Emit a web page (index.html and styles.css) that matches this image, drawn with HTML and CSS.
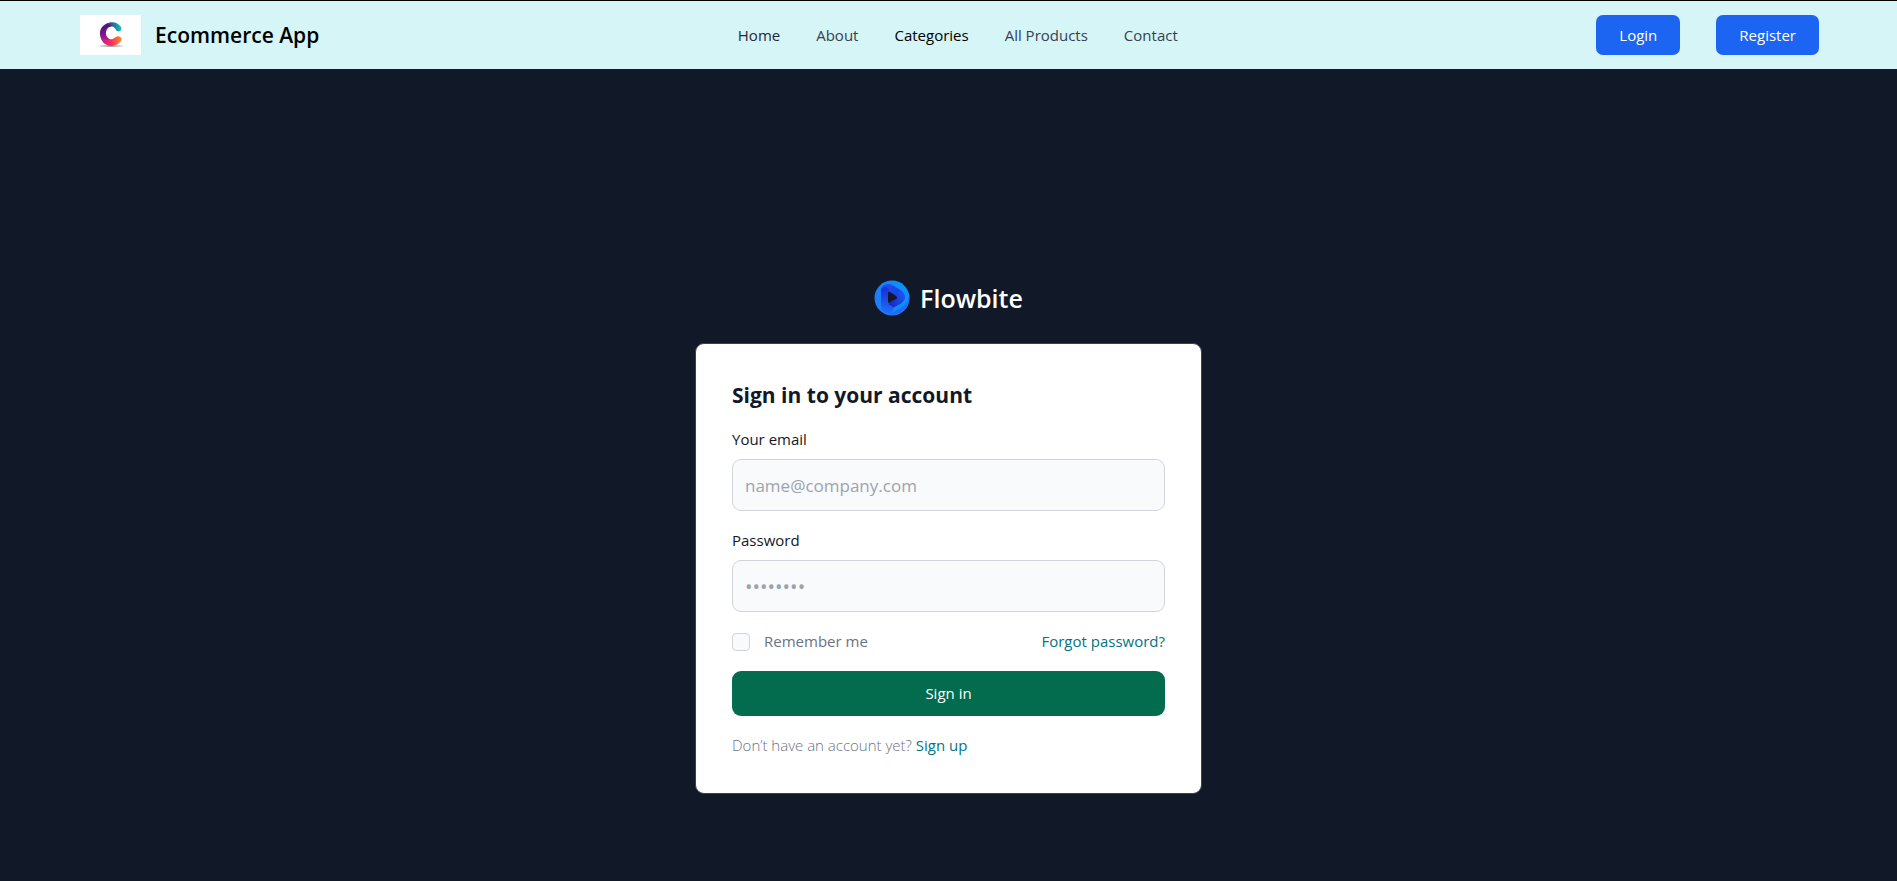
FILE: index.html
```html
<!DOCTYPE html>
<html lang="en">
<head>
<meta charset="utf-8">
<meta name="viewport" content="width=device-width, initial-scale=1">
<title>Ecommerce App</title>
<link rel="stylesheet" href="styles.css">
</head>
<body>
<header class="header">
  <a class="brand" href="#">
    <svg class="brand-logo" viewBox="0 0 61 40" aria-hidden="true">
      <defs>
        <linearGradient id="c-top" x1="0" y1="0" x2="1" y2="0"><stop offset="0" stop-color="#5b1a86"/><stop offset=".45" stop-color="#1f6f9c"/><stop offset="1" stop-color="#16c3c0"/></linearGradient>
        <linearGradient id="c-left" x1="0" y1="0" x2=".3" y2="1"><stop offset="0" stop-color="#3b1470"/><stop offset=".5" stop-color="#7a1690"/><stop offset="1" stop-color="#d81b7c"/></linearGradient>
        <linearGradient id="c-bottom" x1="0" y1="0" x2="1" y2="0"><stop offset="0" stop-color="#c4178a"/><stop offset=".5" stop-color="#fa2f62"/><stop offset="1" stop-color="#ff8a1e"/></linearGradient>
        <radialGradient id="c-shadow"><stop offset="0" stop-color="#777"/><stop offset="1" stop-color="#fff"/></radialGradient>
      </defs>
      <rect width="61" height="40" fill="#fff"/>
      <ellipse cx="31" cy="31" rx="15" ry="1.3" fill="url(#c-shadow)"/>
      <path d="M34 9C25 6 19 13 20 20C21 27 27 31 33 30L32 25C26 24 24 17 28 13C30 11 34 11 36 13C37 11 36 10 34 9Z" fill="url(#c-left)"/>
      <path d="M26 9C31 6 38 7 41 12C43 16 38 18 36 15C34 11 30 9 26 9Z" fill="url(#c-top)"/>
      <path d="M21 23C25 25 31 26 36 22C39 20 43 23 41 26C36 33 24 33 21 23Z" fill="url(#c-bottom)"/>
    </svg>
    <span class="brand-name">Ecommerce App</span>
  </a>
  <nav class="nav" aria-label="Main">
    <a class="nav-link nav-link-home" href="#">Home</a>
    <a class="nav-link" href="#">About</a>
    <a class="nav-link nav-link-active" href="#">Categories</a>
    <a class="nav-link" href="#">All Products</a>
    <a class="nav-link" href="#">Contact</a>
  </nav>
  <div class="actions">
    <button class="button" type="button">Login</button>
    <button class="button" type="button">Register</button>
  </div>
</header>
<main class="main">
  <a class="product" href="#">
    <svg class="product-logo" viewBox="0 0 36 36" aria-hidden="true">
      <defs>
        <linearGradient id="f-disc" x1="0" y1=".3" x2="1" y2=".2"><stop offset="0" stop-color="#1f7cf8"/><stop offset="1" stop-color="#0795ff"/></linearGradient>
        <linearGradient id="f-top" gradientUnits="userSpaceOnUse" x1="8" y1="8" x2="27" y2="18"><stop offset="0" stop-color="#1b4ff0"/><stop offset="1" stop-color="#1c3fe0"/></linearGradient>
        <linearGradient id="f-right" gradientUnits="userSpaceOnUse" x1="28" y1="16" x2="13" y2="24"><stop offset="0" stop-color="#1c50ea"/><stop offset="1" stop-color="#1a1ec0"/></linearGradient>
        <linearGradient id="f-left" gradientUnits="userSpaceOnUse" x1="9" y1="31" x2="12" y2="11"><stop offset="0" stop-color="#1d6cf8"/><stop offset="1" stop-color="#1b35dc"/></linearGradient>
      </defs>
      <circle cx="18" cy="18" r="17.5" fill="url(#f-disc)"/>
      <path d="M20 35C30 34 36 26 35 16C34 23 30 26 26 28L19 32C16 34 12 33 9 31C12 34 16 35 20 35Z" fill="#1f6cf6"/>
      <g fill="none" stroke-width="8" stroke-linecap="round" stroke-linejoin="round">
        <path d="M11 10Q13 7 17 9L25 14Q28 17 25 20" stroke="url(#f-top)"/>
        <path d="M26 15Q28 18 25 20L14 26" stroke="url(#f-right)"/>
        <path d="M11 11V25Q11 29 15 29" stroke="url(#f-left)"/>
      </g>
      <path d="M14 13Q14 11 16 12L22 16Q24 18 22 19L14 23Z" fill="#111827"/>
    </svg>
    <span>Flowbite</span>
  </a>
  <section class="card">
    <h1 class="card-title">Sign in to your account</h1>
    <form class="form">
      <div class="field">
        <label class="label" for="email">Your email</label>
        <input class="input" id="email" type="email" placeholder="name@company.com">
      </div>
      <div class="field">
        <label class="label" for="password">Password</label>
        <input class="input input-password" id="password" type="password" placeholder="••••••••">
      </div>
      <div class="options">
        <div class="remember">
          <input class="checkbox" id="remember" type="checkbox">
          <label for="remember">Remember me</label>
        </div>
        <a class="link" href="#">Forgot password?</a>
      </div>
      <button class="submit" type="submit">Sign in</button>
      <p class="signup">Don’t have an account yet? <a class="link" href="#">Sign up</a></p>
    </form>
  </section>
</main>
</body>
</html>
```
FILE: styles.css
```css
* {
  box-sizing: border-box;
}

body {
  margin: 0;
  min-height: 100vh;
  display: flex;
  flex-direction: column;
  background: #111827;
  color: #111827;
  font: 15px/23px "Open Sans", "Noto Sans", sans-serif;
}

a {
  text-decoration: none;
}

button,
input {
  font: inherit;
}

.header {
  display: flex;
  align-items: center;
  justify-content: space-between;
  padding: 14px 78px 14px 80px;
  border-top: 1px solid #000;
  background: #d5f5f6;
}

.brand {
  display: flex;
  align-items: center;
  gap: 14px;
  color: #000;
}

.brand-logo {
  width: 61px;
  height: 40px;
}

.brand-name {
  font-size: 21px;
  font-weight: 600;
}

.nav {
  display: flex;
  gap: 36px;
}

.nav-link {
  color: #374151;
}

.nav-link-home {
  color: #1f2937;
}

.nav-link-active {
  color: #000;
}

.actions {
  display: flex;
  gap: 36px;
}

.button {
  height: 40px;
  padding: 0 23px;
  border: 0;
  border-radius: 7px;
  background: #1c64f2;
  color: #fff;
}

.main {
  flex: 1;
  display: flex;
  flex-direction: column;
  align-items: center;
  justify-content: center;
  gap: 27px;
  padding: 124px 24px 0;
}

.product {
  display: flex;
  align-items: center;
  gap: 10px;
  color: #fff;
  font-size: 25px;
  font-weight: 600;
  line-height: 36px;
}

.product-logo {
  width: 36px;
  height: 36px;
}

.card {
  width: 100%;
  max-width: 507px;
  padding: 36px;
  border: 1px solid #374151;
  border-radius: 9px;
  background: #fff;
}

.card-title {
  margin: 0 0 18px;
  font-size: 21px;
  line-height: 30px;
}

.form {
  display: flex;
  flex-direction: column;
  gap: 18px;
}

.field {
  display: flex;
  flex-direction: column;
  gap: 8px;
}

.input {
  width: 100%;
  height: 52px;
  padding: 0 12px;
  border: 1px solid #d1d5db;
  border-radius: 9px;
  background: #f9fafb;
  color: #111827;
  font-size: 17px;
}

.input-password {
  font-size: 20px;
}

.input::placeholder {
  color: #9ca3af;
}

.options,
.remember {
  display: flex;
  align-items: center;
}

.options {
  justify-content: space-between;
}

.remember {
  gap: 14px;
  color: #6b7280;
}

.checkbox {
  appearance: none;
  width: 18px;
  height: 18px;
  margin: 0;
  border: 1px solid #d1d5db;
  border-radius: 4px;
  background: #f9fafb;
}

.checkbox:checked {
  background: #1c64f2;
}

.submit {
  height: 45px;
  border: 0;
  border-radius: 9px;
  background: #046c4e;
  color: #fff;
}

.link {
  color: #047481;
  font-weight: 400;
}

.signup {
  margin: 0;
  color: #6b7280;
  font-weight: 300;
}
```
